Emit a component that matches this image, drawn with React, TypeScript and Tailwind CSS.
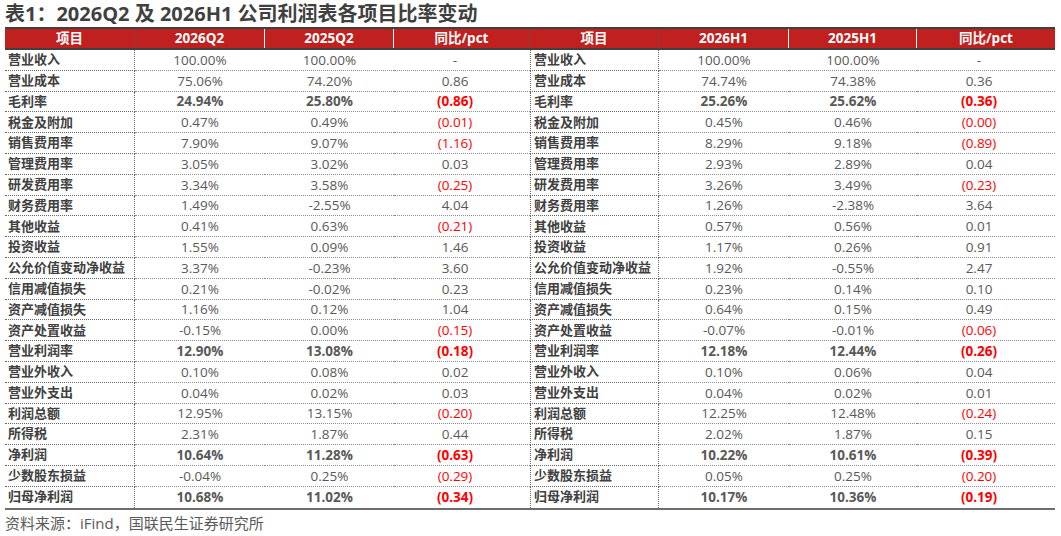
import { Fragment } from "react";

type Row = {
  label: string;
  q: [string, string, string];
  h: [string, string, string];
  bold?: boolean;
};

const ROWS: Row[] = [
  { label: "营业收入", q: ["100.00%", "100.00%", "-"], h: ["100.00%", "100.00%", "-"] },
  { label: "营业成本", q: ["75.06%", "74.20%", "0.86"], h: ["74.74%", "74.38%", "0.36"] },
  { label: "毛利率", q: ["24.94%", "25.80%", "(0.86)"], h: ["25.26%", "25.62%", "(0.36)"], bold: true },
  { label: "税金及附加", q: ["0.47%", "0.49%", "(0.01)"], h: ["0.45%", "0.46%", "(0.00)"] },
  { label: "销售费用率", q: ["7.90%", "9.07%", "(1.16)"], h: ["8.29%", "9.18%", "(0.89)"] },
  { label: "管理费用率", q: ["3.05%", "3.02%", "0.03"], h: ["2.93%", "2.89%", "0.04"] },
  { label: "研发费用率", q: ["3.34%", "3.58%", "(0.25)"], h: ["3.26%", "3.49%", "(0.23)"] },
  { label: "财务费用率", q: ["1.49%", "-2.55%", "4.04"], h: ["1.26%", "-2.38%", "3.64"] },
  { label: "其他收益", q: ["0.41%", "0.63%", "(0.21)"], h: ["0.57%", "0.56%", "0.01"] },
  { label: "投资收益", q: ["1.55%", "0.09%", "1.46"], h: ["1.17%", "0.26%", "0.91"] },
  { label: "公允价值变动净收益", q: ["3.37%", "-0.23%", "3.60"], h: ["1.92%", "-0.55%", "2.47"] },
  { label: "信用减值损失", q: ["0.21%", "-0.02%", "0.23"], h: ["0.23%", "0.14%", "0.10"] },
  { label: "资产减值损失", q: ["1.16%", "0.12%", "1.04"], h: ["0.64%", "0.15%", "0.49"] },
  { label: "资产处置收益", q: ["-0.15%", "0.00%", "(0.15)"], h: ["-0.07%", "-0.01%", "(0.06)"] },
  { label: "营业利润率", q: ["12.90%", "13.08%", "(0.18)"], h: ["12.18%", "12.44%", "(0.26)"], bold: true },
  { label: "营业外收入", q: ["0.10%", "0.08%", "0.02"], h: ["0.10%", "0.06%", "0.04"] },
  { label: "营业外支出", q: ["0.04%", "0.02%", "0.03"], h: ["0.04%", "0.02%", "0.01"] },
  { label: "利润总额", q: ["12.95%", "13.15%", "(0.20)"], h: ["12.25%", "12.48%", "(0.24)"] },
  { label: "所得税", q: ["2.31%", "1.87%", "0.44"], h: ["2.02%", "1.87%", "0.15"] },
  { label: "净利润", q: ["10.64%", "11.28%", "(0.63)"], h: ["10.22%", "10.61%", "(0.39)"], bold: true },
  { label: "少数股东损益", q: ["-0.04%", "0.25%", "(0.29)"], h: ["0.05%", "0.25%", "(0.20)"] },
  { label: "归母净利润", q: ["10.68%", "11.02%", "(0.34)"], h: ["10.17%", "10.36%", "(0.19)"], bold: true },
];

const FONT = { fontFamily: '"Open Sans", "Noto Sans CJK SC", sans-serif' };

function Half({ row, vals, first, last }: { row: Row; vals: [string, string, string]; first: boolean; last: boolean }) {
  const line = last ? "" : "border-b border-dotted border-[#8c8c8c]";
  const weight = row.bold ? "font-bold" : "font-normal";
  const neg = vals[2].startsWith("(");
  return (
    <>
      <div
        className={`flex h-[20.8px] items-center pl-[3px] text-[13px] font-bold text-[#404040] border-r border-dotted border-[#666] ${line} ${first ? "" : "border-l"}`}
      >
        {row.label}
      </div>
      <div className={`flex h-[20.8px] items-center justify-center text-[13.5px] text-[#595959] ${weight} ${line}`}>
        {vals[0]}
      </div>
      <div className={`flex h-[20.8px] items-center justify-center text-[13.5px] text-[#595959] ${weight} ${line}`}>
        {vals[1]}
      </div>
      <div
        className={`flex h-[20.8px] items-center justify-center pr-[14px] text-[13.5px] ${weight} ${line} ${neg ? "text-[#ff0000]" : "text-[#595959]"}`}
      >
        {vals[2]}
      </div>
    </>
  );
}

function HeadCell({ children, divider }: { children: string; divider: "none" | "dotted" | "white" }) {
  const cls =
    divider === "dotted"
      ? "border-r border-dotted border-[#555]"
      : divider === "white"
        ? "border-r border-white"
        : "";
  return (
    <div className={`flex h-[19px] items-center justify-center text-[13.5px] font-bold text-white ${cls}`}>{children}</div>
  );
}

export default function App() {
  return (
    <div className="h-[536px] w-[1061px] overflow-hidden bg-white px-[5px]" style={FONT}>
      {/* Title */}
      <div className="flex h-[27px] items-center pt-[1px] text-[20px] font-bold text-[#404040]">
        表1：2026Q2 及 2026H1 公司利润表各项目比率变动
      </div>

      <div className="w-[1050px] border-b-2 border-[#6e6e6e]">
        {/* Header */}
        <div className="grid grid-cols-[130px_130px_129px_136px_129px_130px_128px_138px] border-y-2 border-y-[#404040] bg-[#c0201e]">
          <HeadCell divider="dotted">项目</HeadCell>
          <HeadCell divider="white">2026Q2</HeadCell>
          <HeadCell divider="white">2025Q2</HeadCell>
          <HeadCell divider="dotted">同比/pct</HeadCell>
          <HeadCell divider="dotted">项目</HeadCell>
          <HeadCell divider="white">2026H1</HeadCell>
          <HeadCell divider="white">2025H1</HeadCell>
          <HeadCell divider="none">同比/pct</HeadCell>
        </div>

        {/* Body */}
        <div className="grid grid-cols-[130px_130px_129px_136px_129px_130px_128px_138px]">
          {ROWS.map((row, i) => (
            <Fragment key={row.label}>
              <Half row={row} vals={row.q} first last={i === ROWS.length - 1} />
              <Half row={row} vals={row.h} first={false} last={i === ROWS.length - 1} />
            </Fragment>
          ))}
        </div>
      </div>

      <div className="text-[15px] leading-[26px] text-[#595959]">资料来源：iFind，国联民生证券研究所</div>
    </div>
  );
}
